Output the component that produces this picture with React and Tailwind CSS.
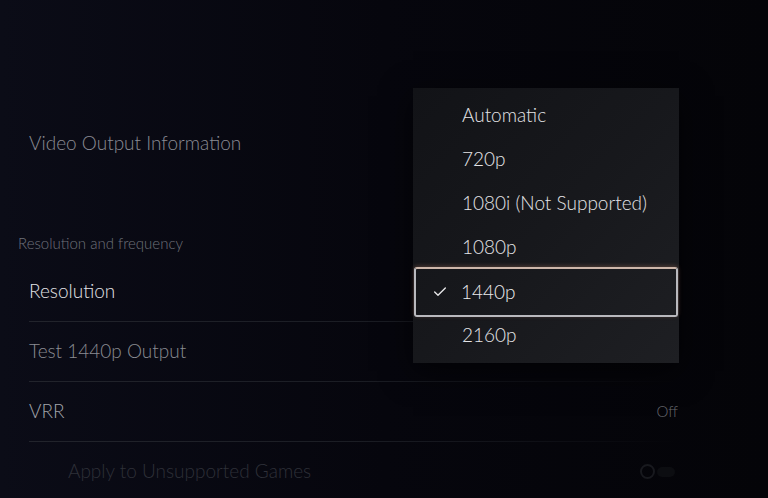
import { Check } from "lucide-react";

const options = ["Automatic", "720p", "1080i (Not Supported)", "1080p", "1440p", "2160p"];

function Divider() {
  return <div className="h-px w-full bg-gradient-to-r from-[#22242c] via-[#1b1d24] to-transparent" />;
}

export default function App() {
  const selected = "1440p";

  return (
    <div
      className="relative h-[498px] w-[768px] overflow-hidden bg-gradient-to-r from-[#0b0c17] via-[#06060d] to-[#040408] font-light"
      style={{ fontFamily: "Lato, 'Noto Sans', sans-serif" }}
    >
      <main className="pl-[29px] pr-[90px] pt-[113px]">
        <div className="flex h-[60px] items-center text-[19px] text-[#8a8c94]">Video Output Information</div>

        <div className="-ml-[11px] mt-[56px] h-[28px] text-[15px] leading-[28px] text-[#6e717a]">
          Resolution and frequency
        </div>

        <div className="mt-[5px]">
          <div className="flex h-[59px] items-center text-[19px] text-[#e2e3e6]">Resolution</div>
          <Divider />
          <div className="flex h-[59px] items-center text-[19px] text-[#8a8c92]">Test 1440p Output</div>
          <Divider />
          <div className="flex h-[59px] items-center justify-between text-[19px] text-[#a2a4aa]">
            <span>VRR</span>
            <span className="text-[15px] text-[#66676d]">Off</span>
          </div>
          <Divider />
          <div className="flex h-[59px] items-center justify-between pl-[39px] text-[19px] text-[#2e3038]">
            <span>Apply to Unsupported Games</span>
            <span className="relative mr-[-2px] flex h-[18px] w-[40px] items-center rounded-full">
              <span className="h-[15px] w-[15px] rounded-full border-2 border-[#18191e]" />
              <span className="ml-[2px] h-[10px] w-[18px] rounded-full bg-[#0c0d11]" />
            </span>
          </div>
        </div>
      </main>

      <div className="absolute left-[413px] top-[88px] flex h-[275px] w-[266px] flex-col bg-gradient-to-br from-[#121317] via-[#17181c] to-[#1e1f23] pt-[5px] shadow-[0_8px_30px_rgba(0,0,0,0.6)]">
        {options.map((o) =>
          o === selected ? (
            <div key={o} className="h-[44px] shrink-0">
              <div className="mx-[1px] -mt-[2px] flex h-[50px] items-center rounded-[3px] border-2 border-[#b9b9be] border-t-[#cdb6aa] text-[19px] text-[#ececee] shadow-[0_-1px_4px_rgba(255,170,130,0.25)]">
                <Check className="ml-[16px] mr-[13px] h-[16px] w-[16px] text-[#e8e8ea]" strokeWidth={2} />
                <span>{o}</span>
              </div>
            </div>
          ) : (
            <div key={o} className="flex h-[44px] shrink-0 items-center pl-[49px] text-[19px] text-[#e4e4e7]">
              {o}
            </div>
          )
        )}
      </div>
    </div>
  );
}
